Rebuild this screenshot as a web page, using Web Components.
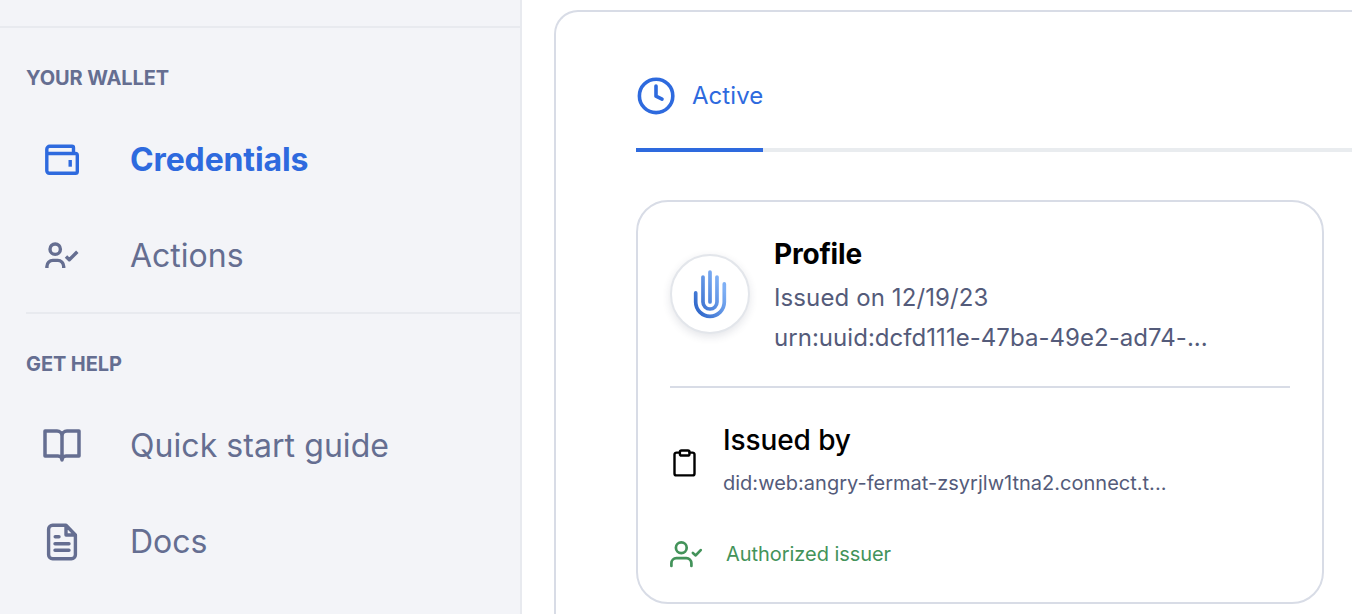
<!DOCTYPE html>
<html lang="en">
<head>
<meta charset="utf-8">
<title>Wallet</title>
<style>
html,body{margin:0;height:100%;overflow:hidden;background:#fff;font-family:Inter,"Liberation Sans",sans-serif}
</style>
</head>
<body>
<wallet-app></wallet-app>
<script>
const icons = {
  wallet: ['40 40', 3.4, '<path d="M31.5 13.5V7.7a1.5 1.5 0 0 0-1.5-1.5H7.8a3 3 0 0 0-3 3v21.5a2.5 2.5 0 0 0 2.5 2.5h26.2a1.8 1.8 0 0 0 1.8-1.8V15.3a1.8 1.8 0 0 0-1.8-1.8H4.8"/><path d="M26.5 20h3.4v6.7h-3.4z" fill="currentColor" stroke="none"/>'],
  user: ['40 40', 3.4, '<circle cx="13.2" cy="13.2" r="5.2"/><path d="M4.9 31.9v-1.5a6 6 0 0 1 6-6h4.8a6 6 0 0 1 6 6v1.5M24 20.5l3.3 3.3 8-8" stroke-linecap="butt"/>'],
  book: ['40 40', 3.5, '<path d="M20 10a5 5 0 0 0-5-5H3v25h13a4 4 0 0 1 4 4zM20 10a5 5 0 0 1 5-5h12v25H24a4 4 0 0 0-4 4z"/>'],
  doc: ['40 40', 3.4, '<path d="M24 3.3H10.6a4 4 0 0 0-4 4v25.4a4 4 0 0 0 4 4h18.8a4 4 0 0 0 4-4V13zM24 3.3V13h9.4M13.2 14.7h3.8M13 21.7h14M13 28.3h14"/>'],
  clock: ['40 40', 3.6, '<circle cx="20.1" cy="19.9" r="16.7"/><path d="M20 10v10.2l6 2.9"/>'],
  clipboard: ['28 32', 2.4, '<path d="M9.8 3.6H6.5a2 2 0 0 0-2 2V24.4a2 2 0 0 0 2 2h16a2 2 0 0 0 2-2V5.6a2 2 0 0 0-2-2h-3"/><rect x="9.9" y="1.5" width="9.6" height="5" rx="1.6"/>'],
  issuer: ['34 32', 2.7, '<circle cx="11.3" cy="9.7" r="5.4"/><path d="M1.4 28v-2.8a5 5 0 0 1 5-5h10a5 5 0 0 1 5 5v2.8"/><path d="M22.9 15l2.8 2.4 5-5.3"/>'],
  hand: ['40 52', 3.7, '<defs><linearGradient id="g" gradientUnits="userSpaceOnUse" x1="4" y1="42" x2="36" y2="24"><stop stop-color="#2c64c8"/><stop offset="1" stop-color="#7fb0f5"/></linearGradient></defs><path stroke="url(#g)" d="M5.7 24.9V34a14.3 14.3 0 0 0 28.6 0V15.9M13 9V34a7 7 0 0 0 14 0V9M20 4h.01V34"/>']
};
const define = (name, css, html) => customElements.define(name, class extends HTMLElement {
  constructor(){
    super();
    this.attachShadow({mode:'open'}).innerHTML =
      `<style>*{box-sizing:border-box}:host{display:block;box-sizing:border-box;white-space:nowrap}${css}</style>` +
      (typeof html === 'function' ? html(this) : html);
  }
});
define('app-icon', ':host{flex:none;line-height:0}svg{display:block;overflow:visible}', el => {
  const [size, stroke, body] = icons[el.getAttribute('name')];
  const [w, h] = size.split(' ');
  return `<svg width="${w}" height="${h}" viewBox="0 0 ${w} ${h}" fill="none" stroke="currentColor" stroke-width="${stroke}" stroke-linecap="round" stroke-linejoin="round">${body}</svg>`;
});
define('nav-item', `:host{display:flex;align-items:center;height:96px;padding-left:42px;gap:48px;color:#656e91;font-size:32px;line-height:40px}
:host([active]){color:#2e6ade;font-weight:700;letter-spacing:-.13px}`,
  el => `<app-icon name="${el.getAttribute('icon')}"></app-icon><span><slot></slot></span>`);
define('nav-section', `:host{padding-top:36px}h2{margin:0 0 0 26px;font-size:20px;line-height:28px;height:28px;font-weight:650;color:#656e91;letter-spacing:-.1px}
.items{padding-top:20px}`,
  el => `<h2>${el.getAttribute('heading')}</h2><div class="items"><slot></slot></div>`);
define('side-bar', `:host{width:522px;height:614px;background:#f3f4f8;border-right:2px solid #e8eaef;padding-top:26px;overflow:hidden}
hr{border:0;margin:0;height:2px;background:#e8eaef}.in{margin:8px 0 0 26px}`,
`<hr><nav-section heading="YOUR WALLET">
<nav-item icon="wallet" active>Credentials</nav-item><nav-item icon="user">Actions</nav-item></nav-section>
<hr class="in"><nav-section heading="GET HELP"><nav-item icon="book" style="letter-spacing:.06px">Quick start guide</nav-item><nav-item icon="doc">Docs</nav-item></nav-section>`);
define('tab-bar', `:host{border-bottom:4px solid #e9ecef;height:76px;display:flex}
.tab{display:flex;gap:16px;height:76px;width:127px;border-bottom:4px solid #2e6ade;color:#2e6ade;font-size:24px;line-height:40px;letter-spacing:.05px}`,
`<div class="tab"><app-icon name="clock"></app-icon><span><slot></slot></span></div>`);
define('issuer-avatar', `:host{width:80px;height:80px;flex:none;border:2px solid #e3e6eb;border-radius:50%;background:#fff;box-shadow:0 3px 8px rgba(30,40,70,.12);display:flex;justify-content:center;padding-top:12px}`,
`<app-icon name="hand"></app-icon>`);
define('credential-card', `:host{width:688px;height:404px;border:2px solid #d8dce6;border-radius:32px;padding:32px 32px 0;color:#545b7a}
.top{display:flex;gap:24px;height:152px}issuer-avatar{margin-top:20px}
h3,p{margin:0}h3{font-size:28px;line-height:40px;color:#000;font-weight:750;letter-spacing:-.2px}
.meta{font-size:24px;line-height:40px;letter-spacing:.11px}.meta.id{letter-spacing:.04px}.top h3{margin-bottom:4px}
hr{border:0;height:2px;margin:0;background:#d8dce6}
.by{display:flex;gap:25px;margin-top:32px;color:#000}.by app-icon{margin-top:29px}.by h3{font-weight:540;letter-spacing:-.1px}
.did{font-size:20px;line-height:28px;margin-top:9px;color:#545b7a;letter-spacing:.01px}
.auth{display:flex;align-items:center;gap:22px;margin-top:41px;color:#43935a;font-size:20px;line-height:32px;letter-spacing:-.05px}`,
`<div class="top"><issuer-avatar></issuer-avatar><div><h3>Profile</h3><p class="meta">Issued on 12/19/23</p><p class="meta id">urn:uuid:dcfd111e-47ba-49e2-ad74-...</p></div></div>
<hr><div class="by"><app-icon name="clipboard"></app-icon><div><h3>Issued by</h3><p class="did">did:web:angry-fermat-zsyrjlw1tna2.connect.t...</p></div></div>
<div class="auth"><app-icon name="issuer"></app-icon><span>Authorized issuer</span></div>`);
define('main-panel', `:host{flex:1;min-width:0;margin:10px 0 0 32px;height:640px;border:2px solid #d8dce6;border-right:0;border-radius:24px 0 0 0;padding:64px 0 0 80px}
credential-card{margin-top:48px}`,
`<tab-bar>Active</tab-bar><credential-card></credential-card>`);
define('wallet-app', ':host{display:flex;height:614px;overflow:hidden}', '<side-bar></side-bar><main-panel></main-panel>');
</script>
</body>
</html>
